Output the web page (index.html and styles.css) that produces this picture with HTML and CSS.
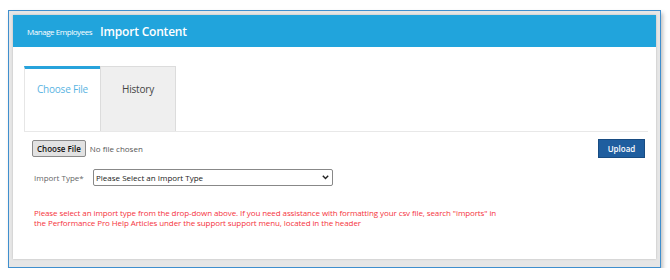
FILE: index.html
```html
<!DOCTYPE html>
<html lang="en">
<head>
  <meta charset="UTF-8" />
  <meta name="viewport" content="width=device-width, initial-scale=1.0" />
  <title>Import Content</title>
  <link rel="stylesheet" href="styles.css">
</head>
<body>
  <div class="frame">
    <div class="panel">
      <div class="header">
        <span class="crumb">Manage Employees</span>
        <h2>Import Content</h2>
      </div>

      <div class="content">
        <div class="tabs">
          <div class="tab active">Choose File</div>
          <div class="tab">History</div>
        </div>

        <div class="form">
          <div class="file-row">
            <div class="file-pick">
              <span class="file-btn">Choose File</span>
              <span class="file-name">No file chosen</span>
            </div>
            <button class="upload">Upload</button>
          </div>

          <div class="type-row">
            <label for="importType">Import Type*</label>
            <div class="select-wrap">
              <select id="importType">
                <option>Please Select an Import Type</option>
              </select>
              <svg class="chev" width="7" height="5" viewBox="0 0 7 5"><path d="M0.8 0.8 L3.5 3.6 L6.2 0.8" fill="none" stroke="#222" stroke-width="1.4"/></svg>
            </div>
          </div>

          <p class="notice">Please select an import type from the drop-down above. If you need assistance with formatting your csv file, search "imports" in<br>the Performance Pro Help Articles under the support support menu, located in the header</p>
        </div>
      </div>
    </div>
  </div>
</body>
</html>
```

FILE: styles.css
```css
body { margin: 0; padding: 10px 9px 0 8px; background: #fff; font-family: "Open Sans", Arial, sans-serif; }
.frame { border: 1px solid #3f8fce; background: #e6e6e6; padding: 4px 4px 8px 4px; box-shadow: 2px 3px 4px rgba(0,0,0,0.25); }
.panel { background: #fff; height: 244px; box-shadow: 0 0 2px rgba(0,0,0,0.2); }
.header { background: #21a4dc; height: 32px; display: flex; align-items: center; padding-left: 14px; color: #fff; }
.crumb { font-size: 8px; letter-spacing: -0.45px; margin-right: 8px; }
.header h2 { margin: 0; font-size: 12px; font-weight: 600; letter-spacing: -0.2px; }
.content { padding: 19px 8px 0 11px; }
.tabs { display: flex; height: 65px; border-bottom: 1px solid #e8e8e8; }
.tab { width: 76px; display: flex; justify-content: center; padding-top: 15px; box-sizing: border-box; font-size: 10px; color: #444; background: #efefef; border: 1px solid #dcdcdc; border-bottom: none; letter-spacing: -0.2px; }
.tab.active { background: #fff; color: #5ab4e2; border: none; border-left: 1px solid #e6e6e6; border-top: 3px solid #27a3dc; padding-top: 13px; }
.form { padding: 7px 3px 0 8px; }
.file-row { display: flex; justify-content: space-between; align-items: center; }
.file-pick { display: flex; align-items: center; gap: 4px; font-size: 8px; }
.file-btn { display: inline-block; padding: 2px 4px; background: #e2e2e2; border: 1px solid #8a8a8a; border-radius: 2px; color: #111; font-weight: 600; }
.file-name { color: #555; }
.upload { width: 47px; height: 19px; background: #1f5e9f; border: 1px solid #184c82; color: #fff; font-family: inherit; font-size: 8px; font-weight: 600; padding: 0; }
.type-row { display: flex; align-items: center; margin-top: 11px; padding-left: 2px; }
.type-row label { width: 59px; font-size: 8px; color: #666; }
.select-wrap { position: relative; display: flex; }
select { appearance: none; -webkit-appearance: none; width: 240px; height: 17px; font-family: inherit; font-size: 8px; color: #222; border: 1px solid #888; border-radius: 2px; padding: 0 2px; background: #fff; }
.chev { position: absolute; right: 4px; top: 6px; pointer-events: none; }
.notice { margin: 22px 0 0 2px; font-size: 8px; line-height: 10px; color: #f5333d; letter-spacing: -0.1px; }
```
